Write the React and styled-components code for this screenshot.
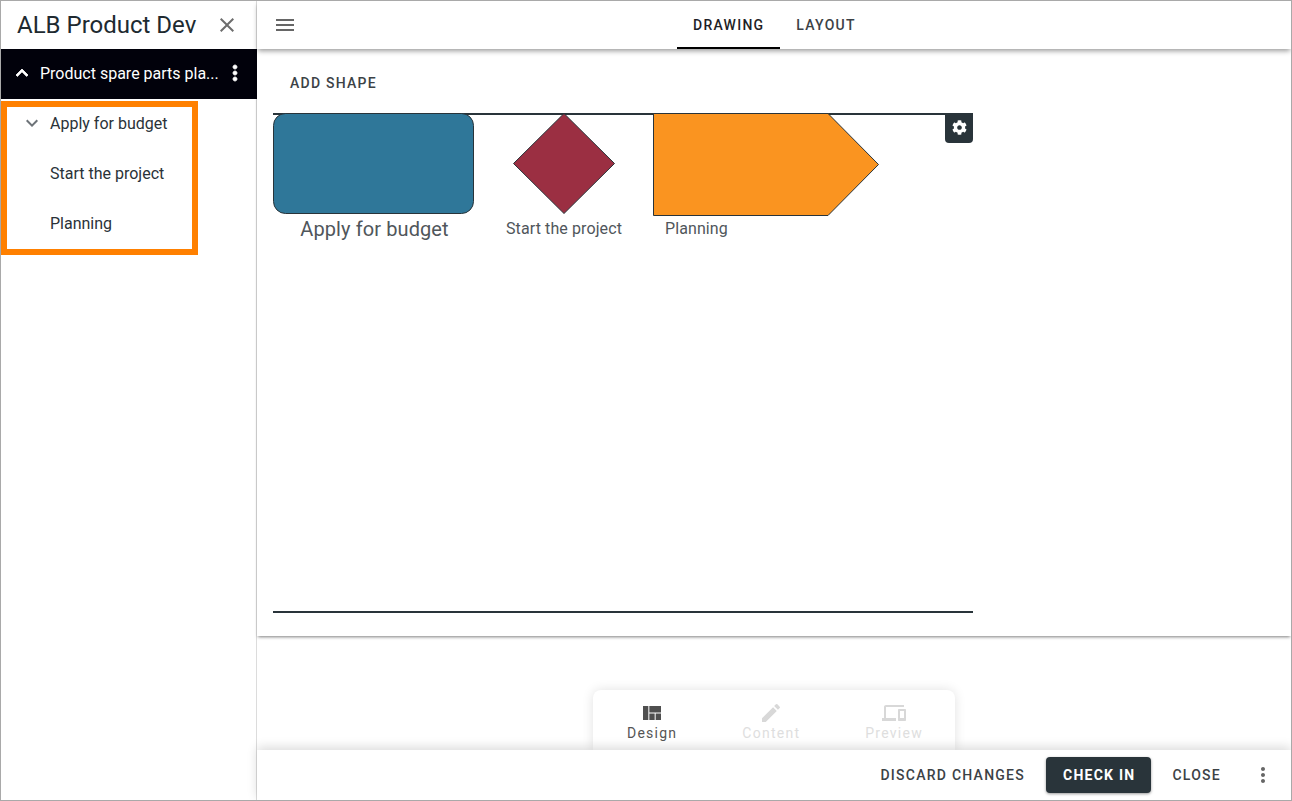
import React from 'react';
import styled, { createGlobalStyle } from 'styled-components';
import { MdMenu, MdClose, MdExpandLess, MdExpandMore, MdMoreVert, MdViewQuilt, MdEdit, MdDevices } from 'react-icons/md';
import { FaCog } from 'react-icons/fa';

const GlobalStyle = createGlobalStyle`
    html, body {
        margin: 0;
        padding: 0;
        background: #fff;
    }
    body {
        font-family: Roboto, "Liberation Sans", sans-serif;
    }
    * {
        box-sizing: border-box;
    }
`

const steps = ['Apply for budget', 'Start the project', 'Planning'];

const modes = [
    {label: 'Design', icon: <MdViewQuilt />, active: true},
    {label: 'Content', icon: <MdEdit />},
    {label: 'Preview', icon: <MdDevices />},
];

const App = () => {
    return (
        <>
        <GlobalStyle />
        <Frame>
            <Sidebar>
                <SideHeader>
                    <SideTitle>ALB Product Dev</SideTitle>
                    <CloseIcon><MdClose /></CloseIcon>
                </SideHeader>
                <ProcessBar>
                    <MdExpandLess />
                    <ProcessName>Product spare parts pla...</ProcessName>
                    <MdMoreVert />
                </ProcessBar>
                <StepList>
                    {steps.map((step, i) => (
                        <StepRow key={step}>
                            <StepChevron>{i === 0 && <MdExpandMore />}</StepChevron>
                            {step}
                        </StepRow>
                    ))}
                    <Highlight />
                </StepList>
            </Sidebar>
            <Main>
                <TopBar>
                    <MenuIcon><MdMenu /></MenuIcon>
                    <Tabs>
                        <Tab $active>DRAWING</Tab>
                        <Tab>LAYOUT</Tab>
                    </Tabs>
                </TopBar>
                <Workspace>
                    <AddShape>ADD SHAPE</AddShape>
                    <Canvas>
                        <Shape style={{left: 0, top: 0}} width="202" height="102" viewBox="0 0 202 102">
                            <rect x=".5" y=".5" width="200" height="100" rx="12" fill="#2f7799" stroke="#29343a" />
                        </Shape>
                        <ShapeLabel $size={20} style={{left: 0, top: 102, width: 203}}>Apply for budget</ShapeLabel>
                        <Shape style={{left: 240, top: 0}} width="102" height="102" viewBox="0 0 102 102">
                            <polygon points="51,.5 101.5,50.5 51,100.5 .5,50.5" fill="#9b2f42" stroke="#29343a" />
                        </Shape>
                        <ShapeLabel $size={16} style={{left: 211, top: 102, width: 160}}>Start the project</ShapeLabel>
                        <Shape style={{left: 380, top: 0}} width="227" height="104" viewBox="0 0 227 104">
                            <polygon points=".5,.5 175,.5 225.5,51.5 175,102.5 .5,102.5" fill="#fa9420" stroke="#29343a" />
                        </Shape>
                        <ShapeLabel $size={16} style={{left: 392, top: 102}}>Planning</ShapeLabel>
                        <SettingsButton><FaCog /></SettingsButton>
                    </Canvas>
                </Workspace>
                <Lower>
                    <ModeCard>
                        {modes.map(mode => (
                            <Mode key={mode.label} $active={mode.active}>
                                {mode.icon}
                                <span>{mode.label}</span>
                            </Mode>
                        ))}
                    </ModeCard>
                </Lower>
                <BottomBar>
                    <TextButton>DISCARD CHANGES</TextButton>
                    <PrimaryButton>CHECK IN</PrimaryButton>
                    <TextButton>CLOSE</TextButton>
                    <MoreIcon><MdMoreVert /></MoreIcon>
                </BottomBar>
            </Main>
        </Frame>
        </>
    )
}

export default App;


const Frame = styled.div`
    width: 1292px;
    height: 801px;
    display: flex;
    overflow: hidden;
    border: 1px solid #a9a9a9;
    background: #fff;
    color: #2a3238;
`

const Sidebar = styled.aside`
    width: 256px;
    flex-shrink: 0;
    border-right: 1px solid #dcdcdc;
    display: flex;
    flex-direction: column;
`

const SideHeader = styled.div`
    height: 48px;
    padding-left: 16px;
    display: flex;
    align-items: center;
    justify-content: space-between;
`

const SideTitle = styled.h1`
    margin: 0;
    font-size: 24px;
    font-weight: 400;
    color: #202a30;
`

const CloseIcon = styled.span`
    width: 24px;
    height: 24px;
    margin-right: 17px;
    color: #6d6d6d;
    font-size: 24px;
    line-height: 0;
`

const ProcessBar = styled.div`
    height: 50px;
    width: 256px;
    padding: 0 10px 2px 9px;
    display: flex;
    align-items: center;
    background: #01010b;
    color: #fff;

    svg {
        font-size: 24px;
        flex-shrink: 0;
    }

    path:not([fill="none"]) {
        stroke: currentColor;
        stroke-width: .8px;
    }
`

const ProcessName = styled.span`
    flex: 1;
    margin-left: 6px;
    white-space: nowrap;
    font-size: 16px;
    font-weight: 400;
`

const StepList = styled.div`
    position: relative;
    margin-top: -1px;
`

const StepRow = styled.div`
    height: 50px;
    display: flex;
    align-items: center;
    font-size: 16px;
    color: #2a3238;
`

const StepChevron = styled.span`
    width: 49px;
    padding-left: 19px;
    display: flex;
    align-items: center;
    color: #6d7378;
    font-size: 24px;
`

const Highlight = styled.div`
    position: absolute;
    left: 0;
    top: 3px;
    width: 197px;
    height: 154px;
    border: 6px solid #ff8000;
    pointer-events: none;
`

const Main = styled.main`
    flex: 1;
    min-width: 0;
    display: flex;
    flex-direction: column;
`

const TopBar = styled.header`
    position: relative;
    z-index: 2;
    height: 48px;
    flex-shrink: 0;
    padding-left: 16px;
    display: flex;
    align-items: center;
    background: #fff;
    box-shadow: 0 3px 5px -1px rgba(0, 0, 0, .4);
`

const MenuIcon = styled.span`
    width: 24px;
    height: 24px;
    color: #666;
    font-size: 24px;
    line-height: 0;
`

const Tabs = styled.nav`
    margin-left: 380px;
    display: flex;
    align-self: stretch;
`

const Tab = styled.div`
    height: 48px;
    padding: 2px 16px 0;
    display: flex;
    align-items: center;
    justify-content: center;
    font-size: 14px;
    font-weight: 500;
    letter-spacing: 1.25px;
    color: ${({$active}) => $active ? '#1f1f27' : '#3c4246'};
    border-bottom: 2px solid ${({$active}) => $active ? '#000' : 'transparent'};
`

const Workspace = styled.section`
    height: 587px;
    flex-shrink: 0;
    padding: 16px 16px 0;
    background: #fff;
    position: relative;
    z-index: 1;
    box-shadow: 0 2px 3px -1px rgba(0, 0, 0, .5);
`

const AddShape = styled.div`
    height: 36px;
    padding-left: 17px;
    display: flex;
    align-items: center;
    font-size: 14px;
    font-weight: 500;
    letter-spacing: 1.25px;
    color: #3c4246;
`

const Canvas = styled.div`
    position: relative;
    width: 700px;
    height: 500px;
    margin-top: 12px;
    border-top: 2px solid #29343a;
    border-bottom: 2px solid #29343a;
`

const Shape = styled.svg`
    position: absolute;
    margin-top: -2px;
    display: block;
`

const ShapeLabel = styled.div`
    position: absolute;
    text-align: center;
    white-space: nowrap;
    font-size: ${({$size}) => $size}px;
    letter-spacing: .1px;
    line-height: 24px;
    color: #50565b;
`

const SettingsButton = styled.div`
    position: absolute;
    top: -2px;
    right: 0;
    width: 28px;
    height: 30px;
    display: flex;
    align-items: center;
    justify-content: center;
    padding-bottom: 1px;
    background: #29343a;
    color: #fff;
    font-size: 15px;
    border-radius: 0 0 4px 4px;
`

const Lower = styled.section`
    flex: 1;
    position: relative;
    display: flex;
    align-items: flex-end;
    padding-left: 336px;
`

const ModeCard = styled.div`
    width: 362px;
    height: 60px;
    padding: 11px 0 0 1.5px;
    display: flex;
    background: #fff;
    border-radius: 8px 8px 0 0;
    box-shadow: 0 0 12px rgba(0, 0, 0, .12);
`

const Mode = styled.div`
    padding: 0 32.5px;
    display: flex;
    flex-direction: column;
    align-items: center;
    font-size: 14px;
    letter-spacing: 1.25px;
    color: ${({$active}) => $active ? '#555' : '#dedede'};

    svg {
        font-size: 24px;
        color: ${({$active}) => $active ? '#4f4f4f' : '#d8d8d8'};
    }
`

const BottomBar = styled.footer`
    position: relative;
    z-index: 2;
    height: 50px;
    flex-shrink: 0;
    padding-right: 16px;
    display: flex;
    align-items: center;
    justify-content: flex-end;
    background: #fff;
    box-shadow: 0 -3px 10px rgba(0, 0, 0, .14);
`

const TextButton = styled.div`
    padding: 0 16px;
    font-size: 14px;
    font-weight: 500;
    letter-spacing: 1.25px;
    color: #3c4246;
`

const PrimaryButton = styled.div`
    height: 36px;
    margin: 0 5px;
    padding: 0 16px 0 17px;
    display: flex;
    align-items: center;
    background: #29343a;
    color: #fff;
    font-size: 14px;
    font-weight: 700;
    letter-spacing: 1.25px;
    border-radius: 4px;
    box-shadow: 0 1px 3px rgba(0, 0, 0, .4);
`

const MoreIcon = styled.span`
    width: 24px;
    height: 24px;
    margin-left: 14px;
    color: #666;
    font-size: 24px;
    line-height: 0;
`
